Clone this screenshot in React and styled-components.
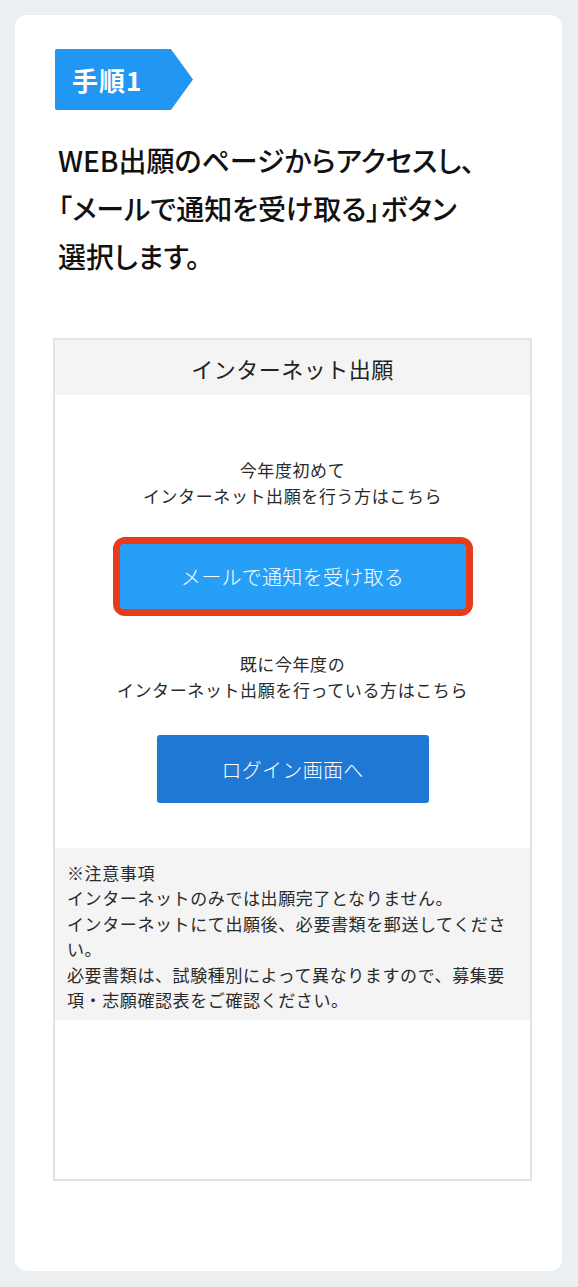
import styled, { createGlobalStyle } from 'styled-components';

const GlobalStyle = createGlobalStyle`
  html, body {
    margin: 0;
    padding: 0;
    background: #ebeff2;
  }
  body {
    font-family: "Noto Sans CJK JP", "Noto Sans", sans-serif;
    color: #111;
  }
`;

const Page = styled.div`
  padding: 15px 16px 16px 15px;
`;

const Card = styled.div`
  background: #fff;
  border-radius: 12px;
  padding: 34px 30px 90px 38px;
  display: flex;
  flex-direction: column;
`;

const StepBadge = styled.div`
  align-self: flex-start;
  margin-left: 2px;
  width: 138px;
  height: 61px;
  background: #2196f3;
  color: #fff;
  font-size: 26px;
  font-weight: 700;
  display: flex;
  align-items: center;
  padding-left: 17px;
  box-sizing: border-box;
  clip-path: polygon(0 0, 84% 0, 100% 50%, 84% 100%, 0 100%);
  border-radius: 2px 0 0 2px;
  letter-spacing: 1px;
`;

const Heading = styled.h2`
  margin: 26px 0 0 5px;
  font-size: 28px;
  font-weight: 500;
  line-height: 48px;
  color: #111;
  white-space: nowrap;
  font-feature-settings: "palt";
`;

const Frame = styled.div`
  margin-top: 58px;
  width: 479px;
  height: 843px;
  box-sizing: border-box;
  border: 2px solid #e3e3e3;
  display: flex;
  flex-direction: column;
`;

const FrameHeader = styled.div`
  height: 55px;
  background: #f4f4f4;
  display: flex;
  align-items: center;
  justify-content: center;
  font-size: 22px;
  color: #222;
  letter-spacing: 0.5px;
`;

const FrameBody = styled.div`
  display: flex;
  flex-direction: column;
  align-items: center;
  padding-top: ${(p) => p.$top}px;
`;

const Lead = styled.p`
  margin: 0;
  font-size: 17px;
  letter-spacing: 0.6px;
  line-height: 26px;
  text-align: center;
  color: #2a2a2a;
`;

const Highlight = styled.div`
  margin-top: 28px;
  width: 360px;
  height: 79px;
  box-sizing: border-box;
  border: 7px solid #e63c1c;
  border-radius: 12px;
  display: flex;
`;

const ActionButton = styled.button`
  flex: ${(p) => (p.$fill ? 1 : 'none')};
  width: ${(p) => (p.$fill ? 'auto' : `${p.$width}px`)};
  height: ${(p) => (p.$fill ? 'auto' : `${p.$height}px`)};
  margin-top: ${(p) => p.$mt || 0}px;
  border: none;
  border-radius: ${(p) => p.$radius}px;
  background: ${(p) => p.$bg};
  color: #fff;
  font-family: inherit;
  font-size: 20px;
  font-weight: 300;
  letter-spacing: 0.3px;
  cursor: pointer;
`;

const Notice = styled.div`
  margin-top: 45px;
  background: #f4f4f4;
  padding: 12px 10px 8px 12px;
  font-size: 17px;
  letter-spacing: 0.6px;
  line-height: 25.4px;
  color: #2a2a2a;
  white-space: nowrap;
`;

export default function App() {
  return (
    <>
      <GlobalStyle />
      <Page>
        <Card>
          <StepBadge>手順1</StepBadge>
          <Heading>
            WEB出願のページからアクセスし、
            <br />
            「メールで通知を受け取る」ボタン
            <br />
            選択します。
          </Heading>

          <Frame>
            <FrameHeader>インターネット出願</FrameHeader>
            <FrameBody $top={62}>
              <Lead>
                今年度初めて
                <br />
                インターネット出願を行う方はこちら
              </Lead>
              <Highlight>
                <ActionButton $fill $radius={4} $bg="#279ff7">
                  メールで通知を受け取る
                </ActionButton>
              </Highlight>
            </FrameBody>
            <FrameBody $top={35}>
              <Lead>
                既に今年度の
                <br />
                インターネット出願を行っている方はこちら
              </Lead>
              <ActionButton $mt={32} $width={272} $height={68} $radius={3} $bg="#1f78d4">
                ログイン画面へ
              </ActionButton>
            </FrameBody>
            <Notice>
              ※注意事項
              <br />
              インターネットのみでは出願完了となりません。
              <br />
              インターネットにて出願後、必要書類を郵送してくださ
              <br />
              い。
              <br />
              必要書類は、試験種別によって異なりますので、募集要
              <br />
              項・志願確認表をご確認ください。
            </Notice>
          </Frame>
        </Card>
      </Page>
    </>
  );
}
